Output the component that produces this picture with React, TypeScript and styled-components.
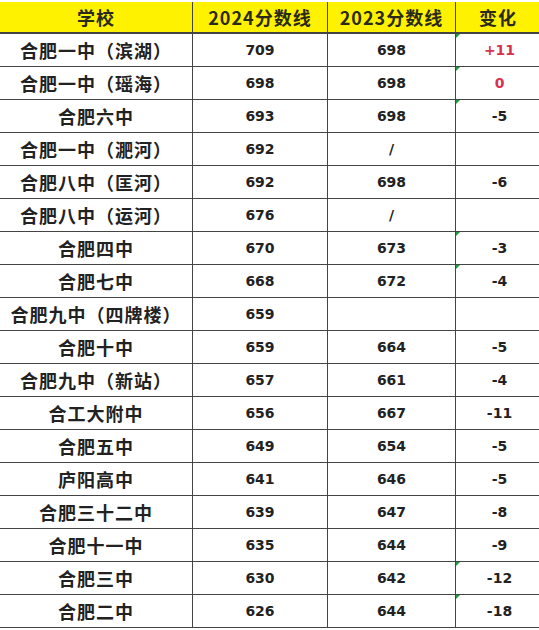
import { FC } from "react";
import styled, { createGlobalStyle } from "styled-components";

/**
 * Data
 */

type Row = {
  school: string;
  y2024: string;
  y2023: string;
  change: string;
  up?: boolean;
  mark?: boolean;
};

const rows: Row[] = [
  { school: "合肥一中（滨湖）", y2024: "709", y2023: "698", change: "+11", up: true, mark: true },
  { school: "合肥一中（瑶海）", y2024: "698", y2023: "698", change: "0", up: true, mark: true },
  { school: "合肥六中", y2024: "693", y2023: "698", change: "-5", mark: true },
  { school: "合肥一中（淝河）", y2024: "692", y2023: "/", change: "" },
  { school: "合肥八中（匡河）", y2024: "692", y2023: "698", change: "-6" },
  { school: "合肥八中（运河）", y2024: "676", y2023: "/", change: "" },
  { school: "合肥四中", y2024: "670", y2023: "673", change: "-3", mark: true },
  { school: "合肥七中", y2024: "668", y2023: "672", change: "-4", mark: true },
  { school: "合肥九中（四牌楼）", y2024: "659", y2023: "", change: "" },
  { school: "合肥十中", y2024: "659", y2023: "664", change: "-5" },
  { school: "合肥九中（新站）", y2024: "657", y2023: "661", change: "-4" },
  { school: "合工大附中", y2024: "656", y2023: "667", change: "-11" },
  { school: "合肥五中", y2024: "649", y2023: "654", change: "-5" },
  { school: "庐阳高中", y2024: "641", y2023: "646", change: "-5" },
  { school: "合肥三十二中", y2024: "639", y2023: "647", change: "-8" },
  { school: "合肥十一中", y2024: "635", y2023: "644", change: "-9" },
  { school: "合肥三中", y2024: "630", y2023: "642", change: "-12", mark: true },
  { school: "合肥二中", y2024: "626", y2023: "644", change: "-18", mark: true },
];

/**
 * Styles
 */

const GlobalStyle = createGlobalStyle`
  html, body {
    margin: 0;
    padding: 0;
    background: #ffffff;
  }
`;

const Page = styled.div`
  width: 539px;
  height: 630px;
  padding-top: 2px;
  box-sizing: border-box;
  background: #fff;
  overflow: hidden;
`;

const Table = styled.table`
  width: 537px;
  border-collapse: collapse;
  table-layout: fixed;
  color: #222;
`;

const HeadCell = styled.th<{ $w: number }>`
  width: ${({ $w }) => $w}px;
  height: 30px;
  padding: 0;
  background: #fff200;
  border-left: 1px solid #444;
  border-bottom: 2px solid #444;
  font-family: "Noto Sans CJK SC", "DejaVu Sans", sans-serif;
  font-size: 18px;
  font-weight: 700;
  letter-spacing: 1px;
  color: #2a2a1a;
  text-align: center;
  vertical-align: middle;

  &:first-child {
    border-left: none;
  }
  &:last-child {
    border-right: 1px solid #444;
  }
`;

const Cell = styled.td`
  height: 32px;
  padding: 0;
  border-left: 1px solid #444;
  border-bottom: 1px solid #444;
  text-align: center;
  vertical-align: middle;
  position: relative;

  &:last-child {
    border-right: 1px solid #444;
  }
`;

const SchoolCell = styled(Cell)`
  border-left: none;
  font-family: "Noto Sans CJK SC", sans-serif;
  font-size: 18px;
  font-weight: 700;
  letter-spacing: 1px;
  line-height: 20px;
  white-space: nowrap;
`;

const NumCell = styled(Cell)`
  font-family: "DejaVu Sans", sans-serif;
  font-size: 14px;
  font-weight: 700;
  line-height: 16px;
`;

const ChangeCell = styled(NumCell)<{ $up?: boolean; $mark?: boolean }>`
  color: ${({ $up }) => ($up ? "#d8324f" : "#222")};
  padding-left: 3px;

  &::before {
    content: "";
    display: ${({ $mark }) => ($mark ? "block" : "none")};
    position: absolute;
    left: 0;
    top: 0;
    border-top: 4px solid #1f9a3a;
    border-right: 4px solid transparent;
  }
`;

/**
 * Component
 */

const App: FC = () => {
  return (
    <>
      <GlobalStyle />
      <Page>
        <Table>
          <thead>
            <tr>
              <HeadCell $w={192}>学校</HeadCell>
              <HeadCell $w={134}>2024分数线</HeadCell>
              <HeadCell $w={127}>2023分数线</HeadCell>
              <HeadCell $w={84}>变化</HeadCell>
            </tr>
          </thead>
          <tbody>
            {rows.map((r) => (
              <tr key={r.school}>
                <SchoolCell>{r.school}</SchoolCell>
                <NumCell>{r.y2024}</NumCell>
                <NumCell>{r.y2023}</NumCell>
                <ChangeCell $up={r.up} $mark={r.mark}>
                  {r.change}
                </ChangeCell>
              </tr>
            ))}
          </tbody>
        </Table>
      </Page>
    </>
  );
};

export default App;
